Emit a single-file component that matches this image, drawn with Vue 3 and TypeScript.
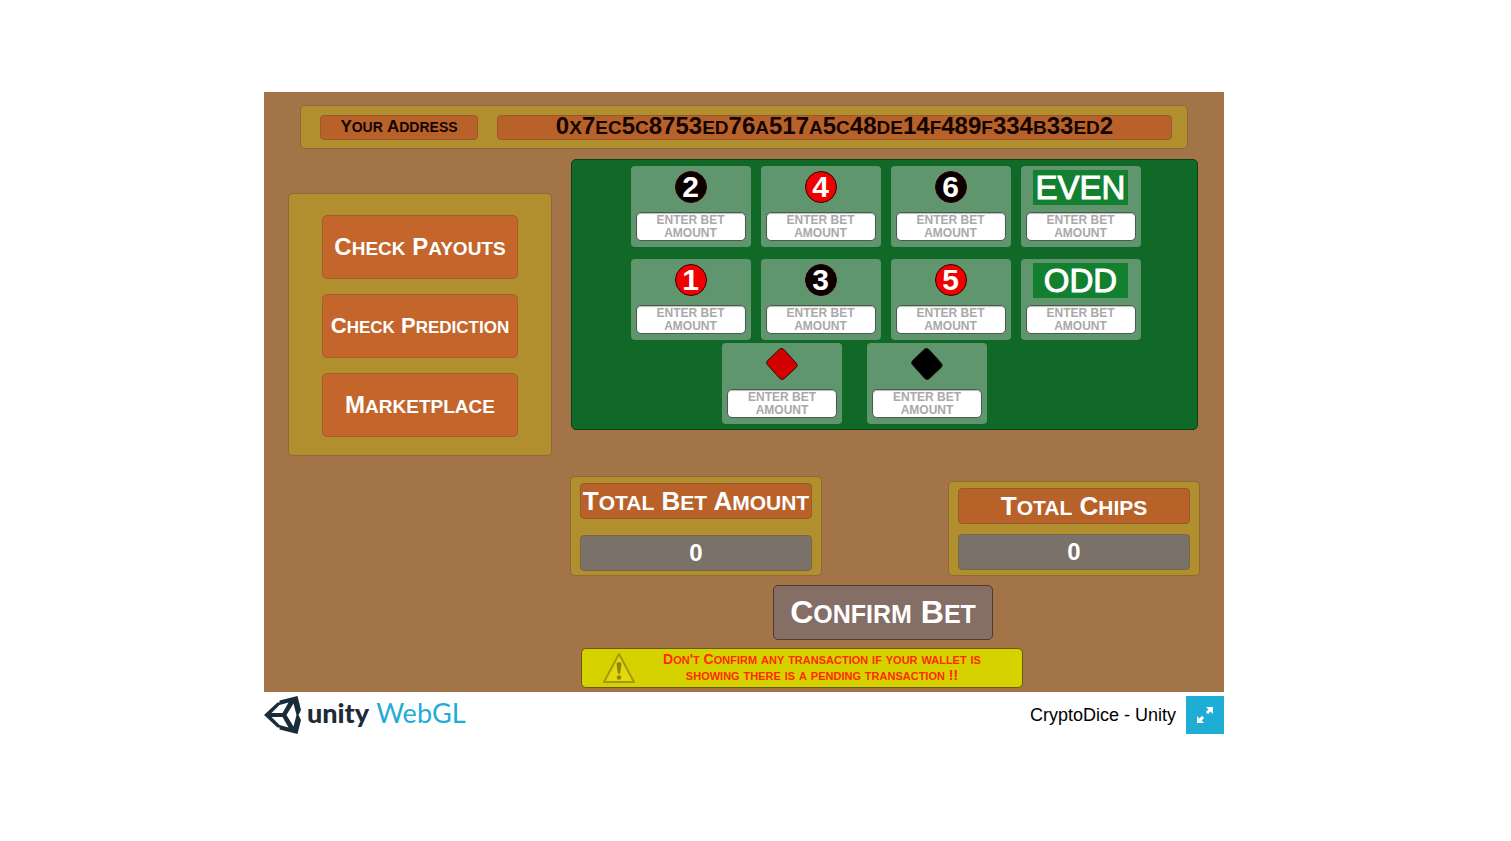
<script setup lang="ts">
import { defineComponent, h, ref } from 'vue'

interface Bet {
  id: string
  kind: 'number' | 'word' | 'diamond'
  label: string
  tone: 'black' | 'red' | 'green'
}

const rows: Bet[][] = [
  [
    { id: 'two', kind: 'number', label: '2', tone: 'black' },
    { id: 'four', kind: 'number', label: '4', tone: 'red' },
    { id: 'six', kind: 'number', label: '6', tone: 'black' },
    { id: 'even', kind: 'word', label: 'EVEN', tone: 'green' },
  ],
  [
    { id: 'one', kind: 'number', label: '1', tone: 'red' },
    { id: 'three', kind: 'number', label: '3', tone: 'black' },
    { id: 'five', kind: 'number', label: '5', tone: 'red' },
    { id: 'odd', kind: 'word', label: 'ODD', tone: 'green' },
  ],
  [
    { id: 'red', kind: 'diamond', label: '', tone: 'red' },
    { id: 'black', kind: 'diamond', label: '', tone: 'black' },
  ],
]

const amounts = ref<Record<string, string>>({})
const address = '0x7ec5c8753ed76a517a5c48de14f489f334b33ed2'
const actions = ['Check Payouts', 'Check Prediction', 'Marketplace']

// Splits text so that lower-case runs are set as smaller capitals.
const Caps = defineComponent({
  props: { text: { type: String, required: true } },
  setup(props) {
    return () =>
      h(
        'span',
        { class: 'caps' },
        (props.text.match(/[a-z]+|[^a-z]+/g) ?? []).map((run) =>
          /[a-z]/.test(run) ? h('span', { class: 'low' }, run) : run,
        ),
      )
  },
})
</script>

<template>
  <div class="page">
    <div class="player">
      <main class="stage">
        <header class="address-bar">
          <div class="plate address-label"><Caps text="Your Address" /></div>
          <div class="plate address-value"><Caps :text="address" /></div>
        </header>

        <div class="middle">
          <nav class="panel menu">
            <button
              v-for="a in actions"
              :key="a"
              type="button"
              class="action"
              :class="{ compact: a.length > 14 }"
            >
              <Caps :text="a" />
            </button>
          </nav>

          <section class="board">
            <div v-for="(row, i) in rows" :key="i" class="row" :class="'row-' + i">
              <div v-for="bet in row" :key="bet.id" class="cell">
                <label :for="bet.id" class="mark" :class="[bet.kind, bet.tone]">
                  <svg v-if="bet.kind === 'diamond'" width="32" height="34" viewBox="0 -1 32 34" role="img" :aria-label="bet.id">
                    <path d="M13.6 1.1Q16 -.4 18 1.6L30.6 15.6Q32 17.6 30.2 19.4L18.4 30.6Q16 32.6 13.8 30.4L1.2 16.4Q-.2 14.4 1.6 12.6Z" />
                  </svg>
                  <template v-else>{{ bet.label }}</template>
                </label>
                <textarea :id="bet.id" v-model="amounts[bet.id]" rows="2" placeholder="ENTER BET AMOUNT"></textarea>
              </div>
            </div>
          </section>
        </div>

        <div class="lower">
          <div class="totals">
            <section class="panel total">
              <div class="plate total-label"><Caps text="Total Bet Amount" /></div>
              <output class="total-value">0</output>
            </section>
            <section class="panel total chips">
              <div class="plate total-label"><Caps text="Total Chips" /></div>
              <output class="total-value">0</output>
            </section>
          </div>
          <button type="button" class="confirm"><Caps text="Confirm Bet" /></button>
          <div class="warning" role="alert">
            <svg width="34" height="32" viewBox="0 0 34 32" aria-hidden="true">
              <path d="M17 2 32 30H2Z" fill="#e6d60c" stroke="#a39a0b" stroke-width="2" stroke-linejoin="round" />
              <path d="M14.500 11.500Q17 8.500 19.500 11.500L18.200 21.500H15.800Z" fill="#8b830c" />
              <circle cx="17" cy="25.500" r="2.200" fill="#8b830c" />
            </svg>
            <p>
              <Caps text="Don't Confirm any transaction if your wallet is" /><br />
              <Caps text="showing there is a pending transaction !!" />
            </p>
          </div>
        </div>
      </main>

      <footer class="footer">
        <div class="logo">
          <svg width="38" height="38" viewBox="0 0 38 38" aria-hidden="true">
            <path
              fill="#1b2b38"
              fill-rule="evenodd"
              d="M0 19 13.500 6.500H15.500V4.500L33.500 0 37 14 34.500 19 37 24 33.500 38 15.500 33.500V31.500H13.500ZM7.500 17 18.500 17 24.500 6.500 15.500 9ZM7.500 21 18.500 21 24.500 31.500 15.500 29ZM22.500 19 29.500 7.500 32.500 19 29.500 30.500Z"
            />
          </svg>
          <span class="unity">unity</span>
          <span class="webgl">WebGL</span>
        </div>
        <div class="title">CryptoDice - Unity</div>
        <button type="button" class="fullscreen" aria-label="Fullscreen">
          <svg width="18" height="18" viewBox="0 0 18 18" fill="#fff" aria-hidden="true">
            <path d="M10 1H17V8L14.600 5.600 12 8.200 9.800 6 12.400 3.400Z" />
            <path d="M8 17H1V10L3.400 12.400 6 9.800 8.200 12 5.600 14.600Z" />
          </svg>
        </button>
      </footer>
    </div>
  </div>
</template>

<style>
body {
  margin: 0;
  background: #fff;
}

.caps {
  text-transform: uppercase;
  white-space: pre-wrap;
}

.caps .low {
  font-size: var(--low);
}
</style>

<style scoped>
.page {
  box-sizing: border-box;
  min-height: 100vh;
  padding: 0 23px 15px 0;
  display: flex;
  align-items: center;
  justify-content: center;
  font-family: "Liberation Sans", Arial, sans-serif;
}

.player {
  width: 100%;
  max-width: 960px;
}

.stage {
  box-sizing: border-box;
  padding: 13px 24px 4px;
  background: #a37447;
  font-weight: 700;
  color: #fff;
}

button {
  font: inherit;
  color: inherit;
  cursor: pointer;
  padding: 0;
}

.address-bar {
  box-sizing: border-box;
  height: 44px;
  margin: 0 12px;
  padding: 0 15px 0 19px;
  display: flex;
  align-items: center;
  gap: 19px;
  background: #b18f2e;
  border: 1px solid #8f6a37;
  border-radius: 5px;
}

.plate {
  box-sizing: border-box;
  display: flex;
  align-items: center;
  justify-content: center;
  background: #b8622a;
  border: 1px solid #985a2a;
  border-radius: 4px;
  white-space: nowrap;
}

.address-label {
  flex: none;
  width: 158px;
  height: 25px;
  color: #140400;
  font-size: 17px;
  --low: 14px;
}

.address-value {
  flex: 1;
  height: 25px;
  color: #140400;
  font-size: 24px;
  line-height: 24px;
  --low: 19px;
}

.middle {
  margin-top: 10px;
  display: flex;
  align-items: flex-start;
  gap: 19px;
}

.panel {
  box-sizing: border-box;
  background: #b18f2e;
  border: 1px solid #8f6a37;
  border-radius: 5px;
}

.menu {
  flex: none;
  width: 264px;
  margin-top: 34px;
  padding: 21px 33px 18px;
  display: flex;
  flex-direction: column;
  gap: 15px;
}

.action {
  height: 64px;
  background: #c4652b;
  border: 1px solid #a0602a;
  border-radius: 5px;
  font-size: 24px;
  white-space: nowrap;
  --low: 19px;
}

.action.compact {
  font-size: 22px;
  --low: 17px;
}

.board {
  box-sizing: border-box;
  flex: 1;
  margin-right: 2px;
  padding: 6px 0 5px;
  background: #106926;
  border: 1px solid #0b3f18;
  border-radius: 5px;
}

.row {
  padding-left: 2px;
  display: flex;
  justify-content: center;
  gap: 10px;
}

.row-1 {
  margin-top: 12px;
}

.row-2 {
  margin-top: 3px;
  padding-right: 62px;
  gap: 25px;
}

.cell {
  box-sizing: border-box;
  width: 120px;
  height: 81px;
  padding: 4px 5px 6px;
  display: flex;
  flex-direction: column;
  align-items: center;
  justify-content: space-between;
  background: #5f966d;
  border-radius: 4px;
}

.mark {
  display: flex;
  align-items: center;
  justify-content: center;
}

.number {
  box-sizing: border-box;
  width: 32px;
  height: 32px;
  margin-top: 1px;
  border: 1px solid #300;
  border-radius: 50%;
  font-size: 30px;
  line-height: 30px;
}

.number.black {
  background: #0a0000;
}

.number.red {
  background: #f00000;
}

.word {
  width: 95px;
  height: 35px;
  background: #138030;
  font-size: 33px;
  line-height: 35px;
  font-weight: 400;
  -webkit-text-stroke: 1px #fff;
}

.diamond svg {
  stroke: #1c1408;
  overflow: visible;
}

.diamond.red svg {
  fill: #d20000;
}

.diamond.black svg {
  fill: #000;
}

textarea {
  box-sizing: border-box;
  width: 110px;
  height: 29px;
  padding: 1px 8px 0;
  border: 1px solid #4a5a4e;
  border-radius: 5px;
  background: #fff;
  box-shadow: inset 0 1px 1px #bbb;
  font: 700 12px/13px "Liberation Sans", Arial, sans-serif;
  color: #333;
  text-align: center;
  resize: none;
  overflow: hidden;
}

textarea::placeholder {
  color: #a9a9a9;
  opacity: 1;
}

.lower {
  margin-top: 20px;
  padding-left: 282px;
  display: flex;
  flex-direction: column;
}

.totals {
  display: flex;
  align-items: flex-end;
  justify-content: space-between;
}

.total {
  width: 252px;
  padding: 6px 9px 4px;
  display: flex;
  flex-direction: column;
  gap: 16px;
}

.chips {
  padding-bottom: 5px;
  gap: 10px;
}

.total-label {
  height: 36px;
  font-size: 26px;
  --low: 21px;
}

.total-value {
  box-sizing: border-box;
  height: 36px;
  display: flex;
  align-items: center;
  justify-content: center;
  background: #7a7268;
  border: 1px solid #75683f;
  border-radius: 4px;
  font-size: 24px;
}

.confirm {
  width: 220px;
  height: 55px;
  margin: 9px 0 0 203px;
  background: #856e65;
  border: 1px solid #4e3b33;
  border-radius: 5px;
  font-size: 32px;
  white-space: nowrap;
  --low: 25px;
}

.warning {
  box-sizing: border-box;
  width: 442px;
  height: 40px;
  margin: 8px 0 0 11px;
  padding-left: 20px;
  display: flex;
  align-items: center;
  background: #d6d200;
  border: 1px solid #665c08;
  border-radius: 5px;
  color: #ff2a00;
  font-size: 14px;
  line-height: 15px;
  --low: 11px;
}

.warning p {
  flex: 1;
  margin: 0 14px 0 0;
  text-align: center;
  white-space: nowrap;
}

.footer {
  height: 38px;
  margin-top: 4px;
  display: flex;
  align-items: center;
}

.logo {
  display: flex;
  align-items: flex-start;
  margin-right: auto;
}

.unity {
  margin-left: 5px;
  font: 900 27px/34px Lato, sans-serif;
  color: #1b2b38;
}

.webgl {
  margin-left: 7px;
  font: 400 27px/34px Lato, sans-serif;
  color: #1dadd5;
}

.title {
  font-size: 18px;
  color: #000;
}

.fullscreen {
  width: 38px;
  height: 38px;
  margin-left: 10px;
  display: flex;
  align-items: center;
  justify-content: center;
  background: #1dadd5;
  border: 0;
}
</style>
